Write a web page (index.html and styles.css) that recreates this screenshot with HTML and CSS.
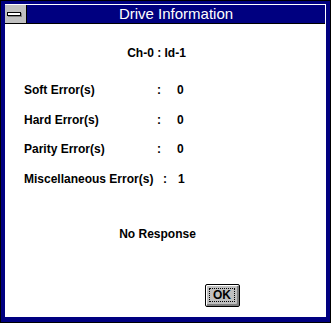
FILE: index.html
```html
<!DOCTYPE html>
<html>
<head>
<meta charset="utf-8">
<link rel="stylesheet" href="styles.css">
</head>
<body>
<div class="window">
  <div class="frame">
    <div class="titlebar">
      <div class="sysmenu"><span class="sysbar"></span></div>
      <div class="title">Drive Information</div>
    </div>
    <div class="client">
      <div class="heading">Ch-0 : Id-1</div>
      <div class="rows">
        <div class="row"><span class="label">Soft Error(s)</span><span class="colon">:</span><span class="value">0</span></div>
        <div class="row"><span class="label">Hard Error(s)</span><span class="colon">:</span><span class="value">0</span></div>
        <div class="row"><span class="label">Parity Error(s)</span><span class="colon">:</span><span class="value">0</span></div>
        <div class="row"><span class="label label-wide">Miscellaneous Error(s)</span><span class="colon colon-narrow">:</span><span class="value">1</span></div>
      </div>
      <div class="status">No Response</div>
      <div class="actions"><button class="ok"><span class="focus">OK</span></button></div>
    </div>
  </div>
</div>
</body>
</html>
```
FILE: styles.css
```css
html, body {
  margin: 0;
  padding: 0;
}
body {
  width: 331px;
  height: 323px;
  overflow: hidden;
  font-family: "Liberation Sans", Arial, sans-serif;
  background: #000080;
}
.window {
  box-sizing: border-box;
  width: 331px;
  height: 323px;
  background: #000080;
  border: 1px solid #000;
  padding: 3px 4px 5px 4px;
  display: flex;
}
.frame {
  flex: 1;
  display: flex;
  flex-direction: column;
  border-top: 1px solid #fff;
  border-right: 1px solid #fff;
  background: #fff;
}
.titlebar {
  display: flex;
  height: 18px;
  border-bottom: 1px solid #000;
}
.sysmenu {
  width: 19px;
  background: #c0c0c0;
  border-right: 1px solid #000;
  padding: 7px 0 0 2px;
  box-sizing: content-box;
}
.sysbar {
  display: block;
  width: 12px;
  height: 2px;
  border: 1px solid #000;
  background: #fff;
  box-shadow: 1px 1px 0 #808080;
}
.title {
  flex: 1;
  background: #000080;
  color: #fff;
  font-size: 15px;
  line-height: 18px;
  text-align: center;
}
.client {
  flex: 1;
  display: flex;
  flex-direction: column;
  padding-top: 22px;
  font-size: 12px;
  font-weight: bold;
  line-height: 14px;
  color: #000;
}
.heading {
  text-align: center;
  padding-right: 17px;
}
.rows {
  margin-top: 23px;
  padding-left: 19px;
  display: flex;
  flex-direction: column;
  gap: 15.6px;
}
.row {
  display: flex;
}
.label {
  width: 133px;
}
.label-wide {
  width: 139px;
}
.colon {
  width: 20px;
}
.colon-narrow {
  width: 15px;
}
.status {
  margin-top: 41px;
  text-align: center;
  padding-right: 15px;
}
.actions {
  margin-top: 43px;
  padding-left: 200px;
  display: flex;
}
.ok {
  box-sizing: border-box;
  width: 35px;
  height: 23px;
  border: 1px solid #000;
  border-radius: 2px;
  background: #c0c0c0;
  box-shadow: inset 1px 1px 0 #fff, inset -2px -2px 0 #808080;
  padding: 0 1px 1px 0;
  display: flex;
  align-items: center;
  justify-content: center;
  font-family: "Liberation Sans", Arial, sans-serif;
  font-size: 12px;
  font-weight: bold;
  color: #000;
}
.focus {
  box-sizing: border-box;
  width: 26px;
  height: 14px;
  border: 1px dotted #000;
  line-height: 12px;
  text-align: center;
}
```
